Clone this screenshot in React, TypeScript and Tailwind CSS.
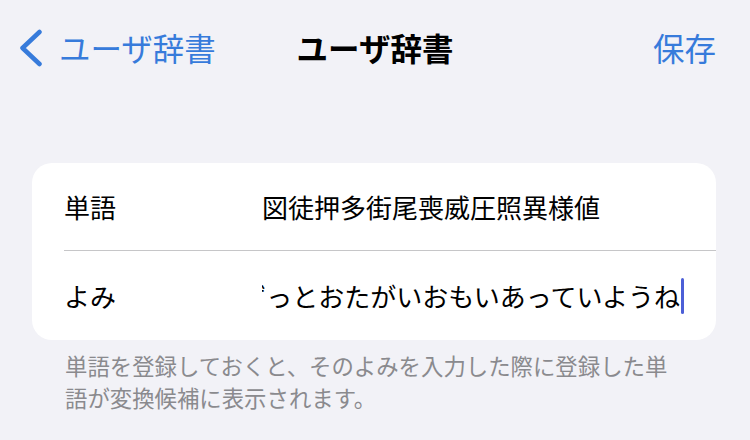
export default function App() {
  return (
    <div
      className="w-[750px] h-[440px] overflow-hidden bg-[#f2f2f7] text-black"
      style={{ fontFamily: '"Noto Sans CJK JP", "Noto Sans", sans-serif' }}
    >
      {/* nav bar */}
      <div className="h-[96px] grid grid-cols-[1fr_auto_1fr] items-center">
        <button className="flex items-center pl-[19px] text-[#377bdb]">
          <svg width="24" height="38" viewBox="0 0 24 38" fill="none" className="shrink-0">
            <polyline
              points="20.5,3 3.5,19 20.5,35"
              stroke="currentColor"
              strokeWidth="4.5"
              strokeLinecap="round"
              strokeLinejoin="round"
            />
          </svg>
          <span className="ml-[16px] text-[31.5px] leading-none">ユーザ辞書</span>
        </button>
        <h1 className="text-[31.5px] font-bold leading-none">ユーザ辞書</h1>
        <button className="justify-self-end pr-[34px] text-[31.5px] leading-none text-[#377bdb]">保存</button>
      </div>

      {/* form card */}
      <div className="mt-[67px] ml-[32px] mr-[34px] rounded-[20px] bg-white">
        <div className="h-[87px] flex items-center pl-[32px] pr-[30px] text-[26px]">
          <span className="w-[198px] shrink-0">単語</span>
          <span className="whitespace-nowrap">図徒押多街尾喪威圧照異様値</span>
        </div>
        <div className="ml-[32px] h-px bg-[#c6c6c8]" />
        <div className="h-[89px] flex items-center pl-[32px] pr-[30px] text-[26px]">
          <span className="w-[198px] shrink-0">よみ</span>
          <div className="flex-1 flex items-center justify-end overflow-hidden">
            <span className="whitespace-nowrap shrink-0">ずっとおたがいおもいあっていようね</span>
            <span className="shrink-0 ml-[1px] w-[3px] h-[36px] rounded-full bg-[#4c5fd7]" />
            <span className="shrink-0 w-[2px]" />
          </div>
        </div>
      </div>

      {/* footer note */}
      <p className="mt-[9px] pl-[65px] pr-[72px] text-[22.4px] leading-[32px] text-[#8a8a8e]">
        単語を登録しておくと、そのよみを入力した際に登録した単語が変換候補に表示されます。
      </p>
    </div>
  );
}
